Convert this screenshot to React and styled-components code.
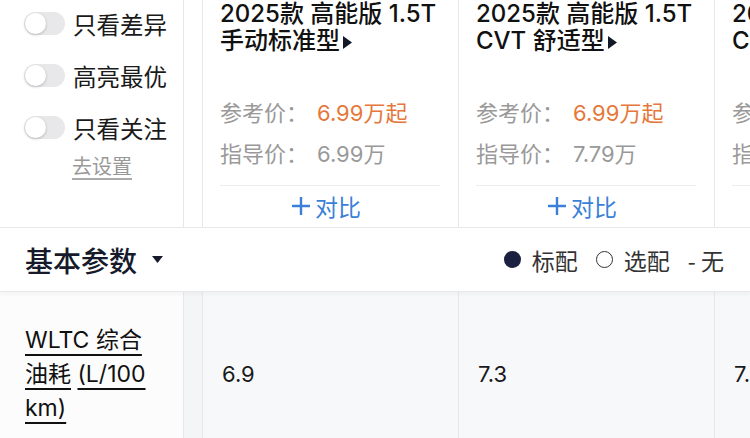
import React from "react";
import styled, { createGlobalStyle } from "styled-components";

const GlobalStyle = createGlobalStyle`
  html, body {
    margin: 0;
    padding: 0;
    background: #ffffff;
    overflow: hidden;
  }
  * {
    box-sizing: border-box;
  }
`;

const Page = styled.div`
  width: 750px;
  height: 438px;
  overflow: hidden;
  display: flex;
  flex-direction: column;
  font-family: Inter, "Noto Sans CJK SC", sans-serif;
  color: #111;
`;

const Header = styled.div`
  display: flex;
  height: 228px;
  flex-shrink: 0;
  border-bottom: 1px solid #e8e8ea;
`;

const SidePanel = styled.div`
  width: 184px;
  flex-shrink: 0;
  border-right: 1px solid #e8e8ea;
  padding: 12px 0 0 24px;
  display: flex;
  flex-direction: column;
  gap: 29px;
  background: #fff;
`;

const Gutter = styled.div`
  width: 18px;
  flex-shrink: 0;
  background: ${({ $tint }) => $tint || "#fff"};
`;

const ToggleRow = styled.div`
  display: flex;
  align-items: center;
  gap: 8px;
  height: 23px;
  font-family: "Noto Sans CJK SC", sans-serif;
  font-size: 23.5px;
  color: #1a1a1a;
  white-space: nowrap;
`;

const Track = styled.div`
  width: 41px;
  height: 23px;
  border-radius: 12px;
  background: #e8e8ea;
  padding: 1px;
  display: flex;
  flex-shrink: 0;
`;

const Knob = styled.div`
  width: 21px;
  height: 21px;
  border-radius: 50%;
  background: #fff;
  box-shadow: 0 1px 3px rgba(0, 0, 0, 0.22);
`;

const SettingLink = styled.span`
  margin: -14px 0 0 48px;
  font-family: "Noto Sans CJK SC", sans-serif;
  font-size: 20px;
  line-height: 24px;
  color: #999;
  text-decoration: underline;
  text-underline-offset: 4px;
  text-decoration-color: #aaa;
  align-self: flex-start;
`;

const CarColumn = styled.div`
  width: 256px;
  flex-shrink: 0;
  border-left: 1px solid #e8e8ea;
  padding: 0 18px 0 17px;
  display: flex;
  flex-direction: column;
`;

const CarTitle = styled.div`
  font-size: 24px;
  font-weight: 500;
  line-height: 27px;
  color: #111;
  white-space: nowrap;
`;

const Caret = styled.svg`
  width: 9px;
  height: 13px;
  margin-left: 3px;
  vertical-align: 0px;
`;

const PriceBlock = styled.div`
  margin-top: 38px;
  font-family: "Noto Sans CJK SC", sans-serif;
  font-size: 22px;
  line-height: 39px;
  color: #999;
  white-space: nowrap;
`;

const PriceValue = styled.span`
  font-family: Inter, "Noto Sans CJK SC", sans-serif;
  color: ${({ $accent }) => ($accent ? "#e5773a" : "#999")};
  font-size: 22px;
  margin-left: 9px;
`;

const Divider = styled.div`
  margin-top: 11px;
  border-top: 1px solid #ececee;
`;

const CompareButton = styled.div`
  flex: 1;
  display: flex;
  align-items: center;
  justify-content: center;
  gap: 4px;
  font-family: "Noto Sans CJK SC", sans-serif;
  font-size: 23px;
  color: #3a7fd8;
  padding: 0 8px 2px 0;
`;

const SectionBar = styled.div`
  height: 64px;
  flex-shrink: 0;
  display: flex;
  align-items: center;
  justify-content: space-between;
  padding: 0 26px 0 25px;
  background: #fff;
  border-bottom: 1px solid #e8e8ea;
  box-shadow: 0 3px 4px rgba(0, 0, 0, 0.03);
  position: relative;
  z-index: 1;
`;

const SectionTitle = styled.div`
  display: flex;
  align-items: center;
  gap: 15px;
  font-family: "Noto Sans CJK SC", sans-serif;
  font-size: 28px;
  font-weight: 500;
  color: #161a2b;
`;

const Legend = styled.div`
  display: flex;
  align-items: center;
  font-family: "Noto Sans CJK SC", sans-serif;
  font-size: 23px;
  color: #333;
`;

const LegendItem = styled.span`
  display: flex;
  align-items: center;
  gap: 11px;
  margin-left: ${({ $first }) => ($first ? "0" : "18px")};
`;

const Dot = styled.span`
  width: 17px;
  height: 17px;
  border-radius: 50%;
  background: ${({ $filled }) => ($filled ? "#1b2040" : "transparent")};
  border: ${({ $filled }) => ($filled ? "none" : "1.5px solid #333")};
`;

const DataRow = styled.div`
  display: flex;
  flex-shrink: 0;
`;

const LabelCell = styled.div`
  width: 184px;
  flex-shrink: 0;
  border-right: 1px solid #e8e8ea;
  background: #fcfcfd;
  padding: 31px 26px 31px 25px;
  font-size: 23px;
  line-height: 34px;
  color: #111;
`;

const Underlined = styled.span`
  text-decoration: underline;
  text-underline-offset: 6px;
  text-decoration-thickness: 1.5px;
`;

const ValueCell = styled.div`
  width: 256px;
  flex-shrink: 0;
  border-left: 1px solid #e8e8ea;
  background: #f7f8fa;
  display: flex;
  align-items: center;
  padding-left: 19px;
  font-size: 22px;
  color: #1a1a1a;
`;

const cars = [
  { line1: "2025款 高能版 1.5T", line2: "手动标准型", ref: "6.99万起", guide: "6.99万", value: "6.9" },
  { line1: "2025款 高能版 1.5T", line2: "CVT 舒适型", ref: "6.99万起", guide: "7.79万", value: "7.3" },
  { line1: "2025款 高能版 1.5T", line2: "CVT 豪华型", ref: "7.59万起", guide: "8.39万", value: "7.3" },
];

const toggles = ["只看差异", "高亮最优", "只看关注"];

const Toggle = ({ label }) => (
  <ToggleRow>
    <Track>
      <Knob />
    </Track>
    {label}
  </ToggleRow>
);

const PlusIcon = () => (
  <svg width="20" height="20" viewBox="0 0 20 20">
    <path d="M10 1 V19 M1 10 H19" stroke="#3a7fd8" strokeWidth="2.4" fill="none" />
  </svg>
);

export default function App() {
  return (
    <Page>
      <GlobalStyle />
      <Header>
        <SidePanel>
          {toggles.map((t) => (
            <Toggle key={t} label={t} />
          ))}
          <SettingLink>去设置</SettingLink>
        </SidePanel>
        <Gutter />
        {cars.map((car, i) => (
          <CarColumn key={i}>
            <CarTitle>
              {car.line1}
              <br />
              {car.line2}
              <Caret viewBox="0 0 9 13">
                <path d="M0 0 L9 6.5 L0 13 Z" fill="#111827" />
              </Caret>
            </CarTitle>
            <PriceBlock>
              <div>
                参考价：<PriceValue $accent>{car.ref}</PriceValue>
              </div>
              <div>
                指导价：<PriceValue>{car.guide}</PriceValue>
              </div>
            </PriceBlock>
            <Divider />
            <CompareButton>
              <PlusIcon />
              对比
            </CompareButton>
          </CarColumn>
        ))}
      </Header>
      <SectionBar>
        <SectionTitle>
          基本参数
          <svg width="11" height="7" viewBox="0 0 11 7">
            <path d="M0 0 L11 0 L5.5 7 Z" fill="#161a2b" />
          </svg>
        </SectionTitle>
        <Legend>
          <LegendItem $first>
            <Dot $filled />
            标配
          </LegendItem>
          <LegendItem>
            <Dot />
            选配
          </LegendItem>
          <LegendItem>- 无</LegendItem>
        </Legend>
      </SectionBar>
      <DataRow>
        <LabelCell>
          <Underlined>WLTC 综合</Underlined> <Underlined>油耗</Underlined>{" "}
          <Underlined>(L/100 km)</Underlined>
        </LabelCell>
        <Gutter $tint="#f4f5f7" />
        {cars.map((car, i) => (
          <ValueCell key={i}>{car.value}</ValueCell>
        ))}
      </DataRow>
    </Page>
  );
}
